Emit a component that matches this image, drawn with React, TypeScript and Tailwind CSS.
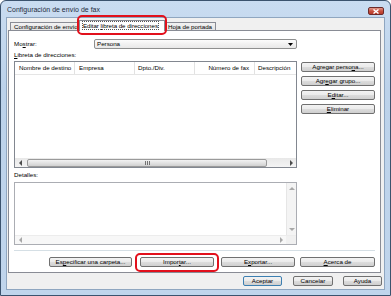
import React from 'react';

const btnBg =
  'bg-[linear-gradient(#f3f3f3,#ebebeb_45%,#dddddd_50%,#cfcfcf)] border border-[#707070] rounded-[2px]';

function Btn({ children, className = '' }: { children: React.ReactNode; className?: string }) {
  return (
    <div className={`flex items-center justify-center h-[10px] leading-none ${btnBg} ${className}`}>
      {children}
    </div>
  );
}

function Arrow({ dir, color = '#4d4d4d' }: { dir: 'l' | 'r' | 'u' | 'd'; color?: string }) {
  const pts = {
    l: '4,0 4,6 1,3',
    r: '1,0 1,6 4,3',
    u: '0,4 6,4 3,1',
    d: '0,1 6,1 3,4',
  }[dir];
  const size = dir === 'l' || dir === 'r' ? { w: 5, h: 6 } : { w: 6, h: 5 };
  return (
    <svg width={size.w} height={size.h} viewBox={`0 0 ${size.w} ${size.h}`}>
      <polygon points={pts} fill={color} />
    </svg>
  );
}

function Highlight({ className }: { className: string }) {
  return <div className={`absolute border-2 border-[#e2101c] rounded-[5px] pointer-events-none ${className}`} />;
}

export default function App() {
  return (
    <div className="w-[391px] h-[296px] flex flex-col px-[5px] pb-[5px] border border-[#3b536e] rounded-t-[6px] bg-[linear-gradient(#c9dcf1,#bcd2ea_30%,#c0d5ec)] font-['Liberation_Sans',Arial,sans-serif] text-[6.2px] text-black overflow-hidden">
      {/* Title bar */}
      <div className="h-[16px] flex justify-between items-start">
        <div className="pl-[1px] pt-[5px] text-[7px] leading-[8px] text-[#1e2b3c]">Configuración de envío de fax</div>
        <div className="mt-[6px] mr-[1px] w-[16px] h-[8px] rounded-[2px] border border-[#6b2a2a] bg-[linear-gradient(#e09a8c,#c8503f_50%,#b83a2a)] flex items-center justify-center">
          <svg width="6" height="5" viewBox="0 0 6 5">
            <path d="M0.5 0.5 L5.5 4.5 M5.5 0.5 L0.5 4.5" stroke="#fff" strokeWidth="1.4" />
          </svg>
        </div>
      </div>

      {/* Client area */}
      <div className="flex-1 flex flex-col bg-[#f0f0f0] border border-[#8fa6c0]">
        {/* Tabs */}
        <div className="h-[12px] flex items-start pl-[3px] pt-[2px] relative z-10">
          <div className="mt-[2px] w-[70px] h-[8px] border border-b-0 border-[#898c95] bg-[linear-gradient(#f2f2f2,#e3e3e3)] pl-[3px] leading-[8px] whitespace-nowrap overflow-hidden">
            Configuración de envío
          </div>
          <div className="relative w-[86px] h-[11px] border border-b-0 border-[#898c95] bg-white pl-[3px] leading-[10px] whitespace-nowrap -ml-[1px]">
            <span className="outline outline-1 outline-dotted outline-[#555] tracking-[-0.05px]">
              Editar <u>l</u>ibreta de direcciones
            </span>
            <Highlight className="-left-[3px] -right-[3px] -top-[6px] -bottom-[4px]" />
          </div>
          <div className="mt-[2px] w-[51px] h-[8px] border border-b-0 border-l-0 border-[#898c95] bg-[linear-gradient(#f2f2f2,#e3e3e3)] pl-[3px] leading-[8px] whitespace-nowrap overflow-hidden">
            Hoja de portada
          </div>
        </div>

        {/* Tab panel */}
        <div className="h-[243px] ml-[1px] mr-[3px] border border-[#898c95] bg-white flex flex-col px-[5px]">
          <div className="mt-[8px] h-[10px] flex items-center">
            <div className="w-[80px]">
              Mo<u>s</u>trar:
            </div>
            <div className="w-[203px] h-[10px] flex items-center justify-between pl-[2px] pr-[3px] border border-[#8e8f8f] rounded-[2px] bg-[linear-gradient(#fcfcfc,#f1f1f1_50%,#e8e8e8)]">
              <span>Persona</span>
              <svg width="5" height="3" viewBox="0 0 5 3">
                <polygon points="0,0 5,0 2.5,3" fill="#000" />
              </svg>
            </div>
          </div>

          <div className="flex gap-[4px]">
            {/* Left column */}
            <div className="w-[283px] flex flex-col">
              <div className="mt-[2px] h-[7px] leading-[7px]">
                <u>L</u>ibreta de direcciones:
              </div>
              <div className="mt-[3px] h-[107px] border border-[#828790] flex flex-col bg-white">
                <div className="h-[13px] flex border-b border-[#e5e5e5] whitespace-nowrap overflow-hidden">
                  <div className="w-[60px] shrink-0 pl-[4px] flex items-center border-r border-[#e2e2e2]">Nombre de destino</div>
                  <div className="w-[60px] shrink-0 pl-[4px] flex items-center border-r border-[#e2e2e2]">Empresa</div>
                  <div className="w-[60px] shrink-0 pl-[3px] flex items-center border-r border-[#e2e2e2]">Dpto./Div.</div>
                  <div className="w-[60px] shrink-0 pr-[5px] flex items-center justify-end border-r border-[#e2e2e2]">Número de fax</div>
                  <div className="shrink-0 pl-[3px] flex items-center">Descripción</div>
                </div>
                <div className="flex-1" />
                <div className="h-[9px] flex items-center bg-[linear-gradient(#e8e8e8,#f4f4f4)]">
                  <div className="w-[10px] flex justify-center">
                    <Arrow dir="l" />
                  </div>
                  <div className="ml-[2px] w-[240px] h-[8px] rounded-[2px] border border-[#9a9a9a] bg-[linear-gradient(#f2f2f2,#e2e2e2_50%,#d0d0d0)] flex items-center justify-center">
                    <svg width="5" height="4" viewBox="0 0 5 4">
                      <path d="M0.5 0 V4 M2.5 0 V4 M4.5 0 V4" stroke="#555" strokeWidth="0.8" />
                    </svg>
                  </div>
                  <div className="flex-1" />
                  <div className="w-[10px] flex justify-center">
                    <Arrow dir="r" />
                  </div>
                </div>
              </div>
              <div className="mt-[3px] h-[7px] leading-[7px]">Detalles:</div>
              <div className="mt-[4px] h-[63px] border border-[#abadb3] flex flex-col bg-white">
                <div className="flex-1 flex">
                  <div className="flex-1" />
                  <div className="w-[10px] bg-[#f4f4f4] border-l border-[#e6e6e6] flex flex-col items-center justify-between py-[3px]">
                    <Arrow dir="u" color="#a8a8a8" />
                    <Arrow dir="d" color="#a8a8a8" />
                  </div>
                </div>
                <div className="h-[9px] flex items-center bg-[#f7f7f7] border-t border-[#ececec]">
                  <div className="w-[10px] flex justify-center">
                    <Arrow dir="l" color="#a8a8a8" />
                  </div>
                  <div className="flex-1" />
                  <div className="w-[10px] flex justify-center">
                    <Arrow dir="r" color="#a8a8a8" />
                  </div>
                  <div className="w-[10px] h-full bg-[#f0f0f0]" />
                </div>
              </div>
            </div>

            {/* Right column */}
            <div className="flex-1 flex flex-col gap-[4px] mt-[13px]">
              <Btn>
                Agregar perso<u>n</u>a...
              </Btn>
              <Btn>
                Agr<u>e</u>gar grupo...
              </Btn>
              <Btn>
                E<u>d</u>itar...
              </Btn>
              <Btn>
                <u>E</u>liminar
              </Btn>
            </div>
          </div>

          <div className="mt-[5px] border-t border-[#d5dfe5] border-b border-b-white" />

          <div className="mt-[5px] flex justify-end">
            <Btn className="w-[83px]">
              Es<u>p</u>ecificar una carpeta...
            </Btn>
            <div className="relative ml-[8px]">
              <Btn className="w-[74px]">
                Impor<u>t</u>ar...
              </Btn>
              <Highlight className="-left-[5px] -right-[5px] -top-[4px] -bottom-[5px]" />
            </div>
            <Btn className="ml-[7px] w-[74px]">
              E<u>x</u>portar...
            </Btn>
            <Btn className="ml-[5px] w-[75px]">
              <u>A</u>cerca de
            </Btn>
          </div>
        </div>

        {/* Dialog buttons */}
        <div className="mt-[3px] mr-[2px] flex justify-end">
          <Btn className="w-[39px] !border-[#3c7fb1]">Aceptar</Btn>
          <Btn className="ml-[11px] w-[40px]">Cancelar</Btn>
          <Btn className="ml-[10px] w-[39px]">Ayuda</Btn>
        </div>
      </div>
    </div>
  );
}
